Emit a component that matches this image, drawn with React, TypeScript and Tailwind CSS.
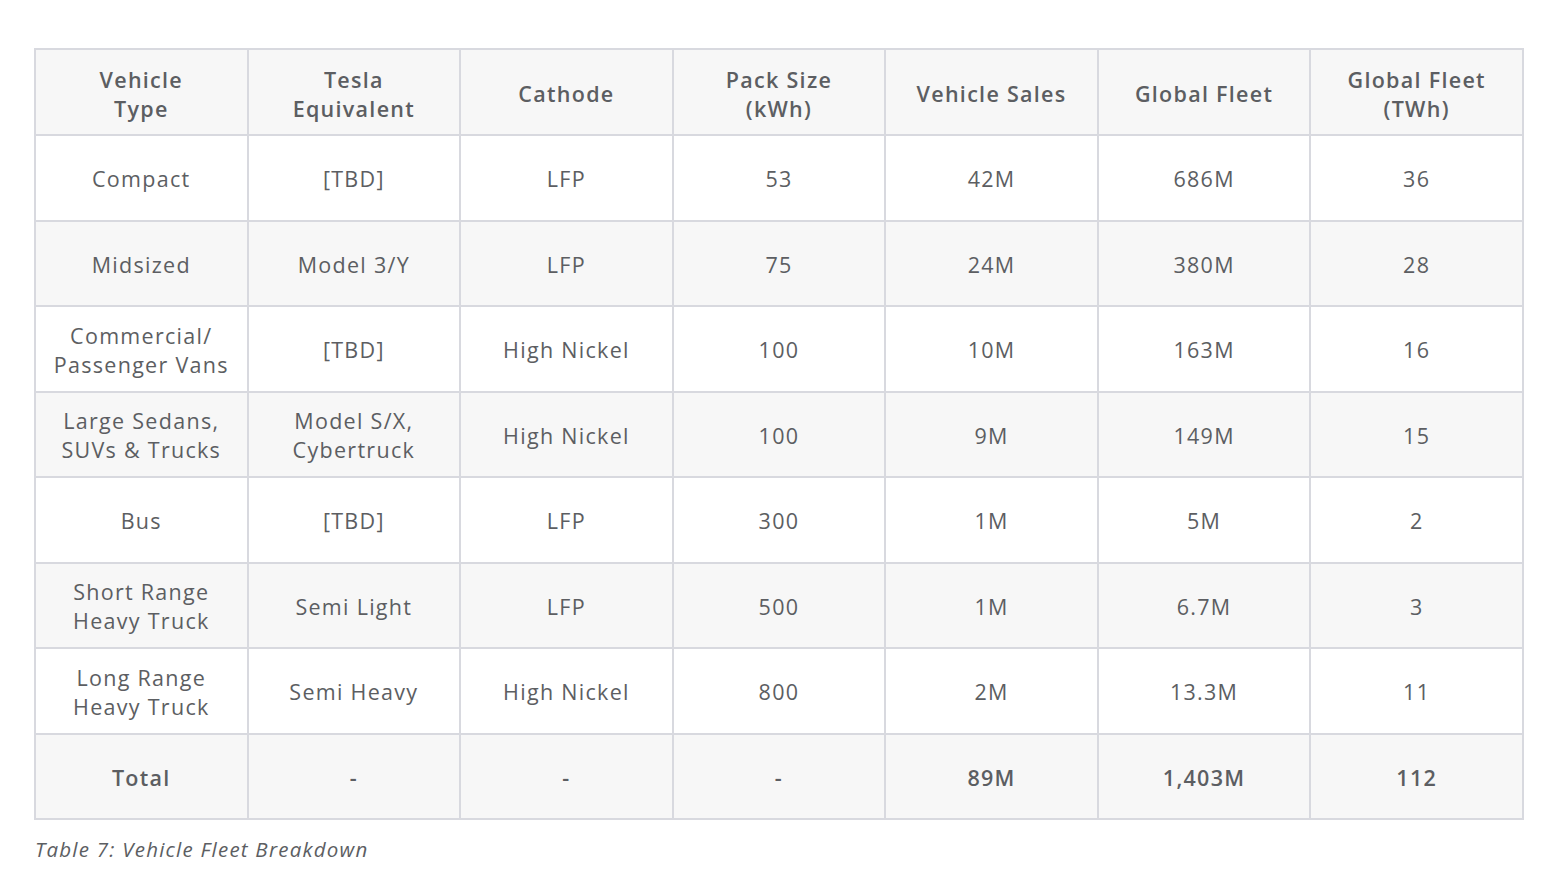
const headers = [
  ['Vehicle', 'Type'],
  ['Tesla', 'Equivalent'],
  ['Cathode'],
  ['Pack Size', '(kWh)'],
  ['Vehicle Sales'],
  ['Global Fleet'],
  ['Global Fleet', '(TWh)'],
];

const rows: string[][][] = [
  [['Compact'], ['[TBD]'], ['LFP'], ['53'], ['42M'], ['686M'], ['36']],
  [['Midsized'], ['Model 3/Y'], ['LFP'], ['75'], ['24M'], ['380M'], ['28']],
  [['Commercial/', 'Passenger Vans'], ['[TBD]'], ['High Nickel'], ['100'], ['10M'], ['163M'], ['16']],
  [['Large Sedans,', 'SUVs & Trucks'], ['Model S/X,', 'Cybertruck'], ['High Nickel'], ['100'], ['9M'], ['149M'], ['15']],
  [['Bus'], ['[TBD]'], ['LFP'], ['300'], ['1M'], ['5M'], ['2']],
  [['Short Range', 'Heavy Truck'], ['Semi Light'], ['LFP'], ['500'], ['1M'], ['6.7M'], ['3']],
  [['Long Range', 'Heavy Truck'], ['Semi Heavy'], ['High Nickel'], ['800'], ['2M'], ['13.3M'], ['11']],
];

const total = ['Total', '-', '-', '-', '89M', '1,403M', '112'];

function Lines({ parts }: { parts: string[] }) {
  return (
    <>
      {parts.map((p, i) => (
        <div key={i}>{p}</div>
      ))}
    </>
  );
}

export default function App() {
  return (
    <div className="min-h-screen bg-white pt-[48px] pl-[34px] text-[#5c5e62] font-['Open_Sans',sans-serif]">
      <table className="w-[1490px] table-fixed border-collapse text-center text-[21.5px] leading-[29px] tracking-[0.06em]">
        <thead>
          <tr className="h-[86px] bg-[#f7f7f7]">
            {headers.map((h, i) => (
              <th key={i} className="border-2 border-[#d8d9df] font-semibold px-1 pt-[3px]">
                <Lines parts={h} />
              </th>
            ))}
          </tr>
        </thead>
        <tbody>
          {rows.map((r, ri) => (
            <tr key={ri} className={ri % 2 === 1 ? 'h-[85.5px] bg-[#f7f7f7]' : 'h-[85.5px] bg-white'}>
              {r.map((c, ci) => (
                <td key={ci} className="border-2 border-[#d8d9df] px-1 pt-[2px]">
                  <Lines parts={c} />
                </td>
              ))}
            </tr>
          ))}
          <tr className="h-[85.5px] bg-[#f7f7f7]">
            {total.map((c, ci) => (
              <td key={ci} className="border-2 border-[#d8d9df] px-1 pt-[2px] font-semibold">
                {c}
              </td>
            ))}
          </tr>
        </tbody>
      </table>
      <p className="mt-[14px] ml-[1px] italic text-[20.5px] tracking-[0.06em] text-[#5c5e62]">
        Table 7: Vehicle Fleet Breakdown
      </p>
    </div>
  );
}
